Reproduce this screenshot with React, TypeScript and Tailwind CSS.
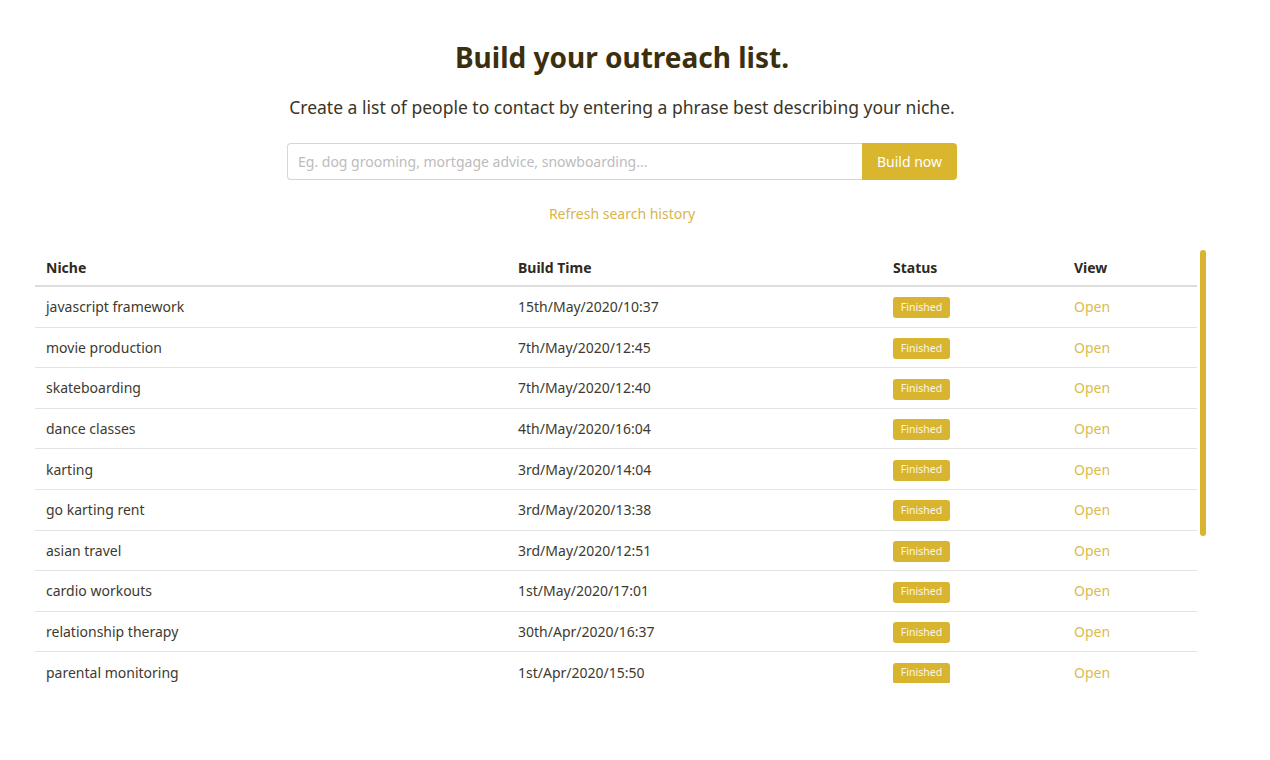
const rows = [
  { niche: 'javascript framework', time: '15th/May/2020/10:37' },
  { niche: 'movie production', time: '7th/May/2020/12:45' },
  { niche: 'skateboarding', time: '7th/May/2020/12:40' },
  { niche: 'dance classes', time: '4th/May/2020/16:04' },
  { niche: 'karting', time: '3rd/May/2020/14:04' },
  { niche: 'go karting rent', time: '3rd/May/2020/13:38' },
  { niche: 'asian travel', time: '3rd/May/2020/12:51' },
  { niche: 'cardio workouts', time: '1st/May/2020/17:01' },
  { niche: 'relationship therapy', time: '30th/Apr/2020/16:37' },
  { niche: 'parental monitoring', time: '1st/Apr/2020/15:50' },
];

const COLS = 'grid grid-cols-[472px_375px_181px_134px]';

function Row({ niche, time }: { niche: string; time: string }) {
  return (
    <div className={`${COLS} h-[40.6px] shrink-0 items-center border-b border-[#e3e3e3] text-[14px] text-[#3d3a30]`}>
      <div className="pl-[11px]">{niche}</div>
      <div className="pl-[11px]">{time}</div>
      <div className="pl-[11px]">
        <span className="inline-flex h-[21px] w-[57px] items-center justify-center rounded-[3px] bg-[#d9b52f] text-[10.5px] text-[#fbf6e4]">
          Finished
        </span>
      </div>
      <div className="pl-[11px]">
        <a href="#" className="text-[14px] text-[#d9bb50]">
          Open
        </a>
      </div>
    </div>
  );
}

export default function App() {
  return (
    <div className="min-h-[760px] w-[1244px] bg-white font-['Noto_Sans',sans-serif]">
      <div className="flex flex-col items-center pt-[36px]">
        <h1 className="text-[28px] font-bold leading-[42px] text-[#3b2f0d]">Build your outreach list.</h1>
        <p className="mt-[16px] text-[17.5px] leading-[26px] text-[#3a3526]">
          Create a list of people to contact by entering a phrase best describing your niche.
        </p>
        <div className="mt-[23px] flex h-[37px] w-[670px]">
          <input
            type="text"
            placeholder="Eg. dog grooming, mortgage advice, snowboarding..."
            className="h-full flex-1 rounded-l-[4px] border border-r-0 border-[#d6d6d6] px-[10px] text-[14px] text-[#3d3a30] outline-none placeholder:text-[#bcbcbc]"
          />
          <button className="h-full w-[95px] rounded-r-[4px] bg-[#dab52e] text-[14px] text-white">Build now</button>
        </div>
        <a href="#" className="mt-[23px] text-[14px] leading-[22px] text-[#d9b54a]">
          Refresh search history
        </a>
      </div>
      <div className="relative ml-[35px] mt-[24px] h-[434px] w-[1172px] overflow-hidden">
        <div className="w-[1162px]">
          <div className={`${COLS} h-[38px] items-center border-b-2 border-[#dedede] text-[14px] font-bold text-[#2f2a1c]`}>
            <div className="pl-[11px]">Niche</div>
            <div className="pl-[11px]">Build Time</div>
            <div className="pl-[11px]">Status</div>
            <div className="pl-[11px]">View</div>
          </div>
          {rows.map((r) => (
            <Row key={r.niche} niche={r.niche} time={r.time} />
          ))}
        </div>
        <div className="absolute left-[1165px] top-[1px] h-[286px] w-[6px] rounded-full bg-[#d9b52f]" />
      </div>
    </div>
  );
}
